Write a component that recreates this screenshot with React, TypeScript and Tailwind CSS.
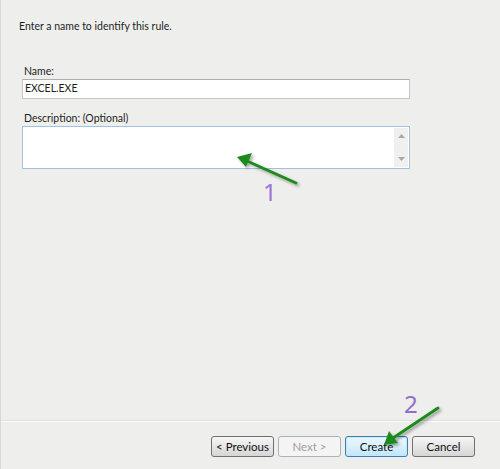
const ui = { fontFamily: 'Lato, "Noto Sans", sans-serif' };

const Btn = ({
  label,
  kind = "normal",
}: {
  label: string;
  kind?: "normal" | "default" | "disabled";
}) => {
  const styles = {
    normal:
      "border-[#707070] bg-gradient-to-b from-[#f6f6f6] via-[#e6e6e6] to-[#d6d6d6] text-[#111]",
    default:
      "border-[#3c7fb1] bg-gradient-to-b from-[#eaf6fd] via-[#d9f0fc] to-[#bee6fd] text-[#111] shadow-[inset_0_0_0_1px_#c7e6f7]",
    disabled: "border-[#adb2b5] bg-[#f4f4f4] text-[#a0a0a0]",
  }[kind];
  return (
    <div
      className={`flex h-[21px] w-[63px] items-center justify-center rounded-[3px] border text-[11.5px] leading-none ${styles}`}
    >
      {label}
    </div>
  );
};

export default function App() {
  return (
    <div
      className="relative flex h-[469px] w-[500px] flex-col overflow-hidden border-l border-[#d8d8d6] bg-[#eeefec] text-[#1e1e1e]"
      style={ui}
    >
      <p className="ml-[18px] mt-[19px] text-[10.5px] leading-[14px]">
        Enter a name to identify this rule.
      </p>

      <div className="ml-[21px] mt-[31px] w-[388px]">
        <label className="ml-[2px] block text-[10.5px] leading-[14px]">Name:</label>
        <div className="mt-[1px] flex h-[20px] items-center border border-[#c4c6c8] border-t-[#acaeb0] bg-white pl-[2px] text-[10.5px]">
          EXCEL.EXE
        </div>

        <label className="ml-[2px] mt-[12px] block text-[10.5px] leading-[14px]">
          Description: (Optional)
        </label>
        <div className="mt-[1px] flex h-[43px] border border-[#9fc2e0] bg-white">
          <div className="flex-1" />
          <div className="my-[1px] mr-[1px] flex w-[14px] flex-col items-center justify-between bg-[#f0f0ef] py-[6px]">
            <svg width="7" height="4" viewBox="0 0 7 4">
              <path d="M0 4 L3.5 0 L7 4 Z" fill="#a8a8a8" />
            </svg>
            <svg width="7" height="4" viewBox="0 0 7 4">
              <path d="M0 0 L3.5 4 L7 0 Z" fill="#a8a8a8" />
            </svg>
          </div>
        </div>
      </div>

      <div className="flex-1" />

      <div className="h-px bg-[#dfe0dd]" />
      <div className="h-px bg-white" />

      <div className="flex h-[47px] items-start justify-end gap-[4px] pr-[25px] pt-[14px]">
        <Btn label="< Previous" />
        <Btn label="Next >" kind="disabled" />
        <Btn label="Create" kind="default" />
        <Btn label="Cancel" />
      </div>

      <svg
        className="pointer-events-none absolute left-0 top-0"
        width="500"
        height="469"
        viewBox="0 0 500 469"
      >
        <defs>
          <filter id="sh" x="-20%" y="-20%" width="140%" height="140%">
            <feDropShadow dx="2" dy="2" stdDeviation="1.5" floodColor="#000" floodOpacity="0.35" />
          </filter>
        </defs>
        <g filter="url(#sh)">
          <line x1="295" y1="183" x2="246" y2="161" stroke="#1e8a1e" strokeWidth="3" strokeLinecap="round" />
          <path d="M236 157 L251 153 L245 167 Z" fill="#1e8a1e" />
          <line x1="437" y1="408" x2="392" y2="438" stroke="#1e8a1e" strokeWidth="3" strokeLinecap="round" />
          <path d="M383 445 L388 431 L397 443 Z" fill="#1e8a1e" />
        </g>
      </svg>

      <span
        className="absolute left-[262px] top-[180px] text-[24px] leading-none text-[#9b74d6]"
        style={{ fontFamily: '"Noto Sans", sans-serif' }}
      >
        1
      </span>
      <span
        className="absolute left-[403px] top-[392px] text-[24px] leading-none text-[#8e6fd0]"
        style={{ fontFamily: '"Noto Sans", sans-serif' }}
      >
        2
      </span>
    </div>
  );
}
